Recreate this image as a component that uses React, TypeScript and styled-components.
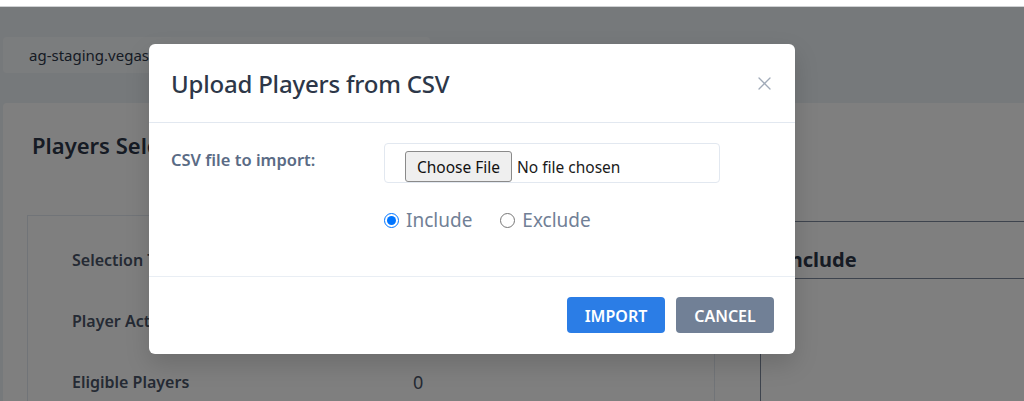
import React from 'react';
import styled, { createGlobalStyle } from 'styled-components';

const GlobalStyle = createGlobalStyle`
  html, body {
    margin: 0;
    padding: 0;
    background: #ffffff;
  }
  body {
    font-family: "Noto Sans", "Open Sans", "Liberation Sans", sans-serif;
  }
  * {
    box-sizing: border-box;
  }
`;

const Shell = styled.div`
  display: flex;
  flex-direction: column;
  height: 401px;
  overflow: hidden;
`;

const BrowserStrip = styled.div`
  height: 7px;
  background: #ffffff;
  border-bottom: 1px solid #cfd1d3;
  flex-shrink: 0;
`;

const Stage = styled.div`
  position: relative;
  flex: 1;
  background: #edf2f7;
  overflow: hidden;
`;

const Page = styled.div`
  width: 1060px;
  padding: 30px 0 0 3px;
`;

const Crumb = styled.div`
  width: 427px;
  height: 36px;
  display: flex;
  align-items: center;
  padding-left: 26px;
  background: #f7fafc;
  border-radius: 4px;
  font-size: 15px;
  color: #2d3748;
`;

const Card = styled.section`
  margin-top: 30px;
  background: #ffffff;
  border-radius: 4px;
  min-height: 320px;
`;

const CardTitle = styled.h2`
  margin: 0;
  padding: 27px 29px 0;
  font-size: 22px;
  line-height: 30px;
  font-weight: 600;
  color: #2d3748;
`;

const CardBody = styled.div`
  display: flex;
  align-items: flex-start;
  gap: 45px;
  padding: 55px 0 0 24px;
`;

const DetailsBox = styled.div`
  width: 688px;
  height: 200px;
  border: 1px solid #e2e8f0;
  padding: 13px 0 0 44px;
`;

const DetailRow = styled.div`
  display: grid;
  grid-template-columns: 341px 1fr;
  align-items: center;
  height: 61px;
  font-size: 16px;
  line-height: 24px;
`;

const DetailLabel = styled.span`
  font-weight: 600;
  color: #4a5568;
`;

const DetailValue = styled.span`
  font-size: 18px;
  color: #4a5568;
`;

const RulesTable = styled.div`
  flex: 1;
  margin-top: 6px;
  height: 200px;
  border-top: 1px solid #7d889c;
  border-left: 1px solid #7d889c;
`;

const RulesHead = styled.div`
  padding: 24px 0 5px 21px;
  border-bottom: 1px solid #7d889c;
  font-size: 20px;
  line-height: 27px;
  font-weight: 700;
  color: #2d3748;
`;

const Overlay = styled.div`
  position: absolute;
  inset: 0;
  background: rgba(0, 0, 0, 0.5);
  padding: 37px 0 0 149px;
`;

const Modal = styled.div`
  width: 646px;
  background: #ffffff;
  border-radius: 6px;
  box-shadow: 0 10px 25px rgba(0, 0, 0, 0.15);
`;

const ModalHeader = styled.header`
  height: 79px;
  display: flex;
  align-items: center;
  justify-content: space-between;
  padding: 0 24px 0 22px;
  border-bottom: 1px solid #e2e8f0;
`;

const ModalTitle = styled.h3`
  margin: 0;
  font-size: 24px;
  font-weight: 500;
  color: #2d3748;
  letter-spacing: -0.2px;
`;

const CloseButton = styled.button`
  display: flex;
  padding: 0;
  border: 0;
  background: none;
  cursor: pointer;
`;

const ModalBody = styled.div`
  height: 154px;
  padding: 20px 22px 0;
  border-bottom: 1px solid #e9eef4;
`;

const FileRow = styled.div`
  display: grid;
  grid-template-columns: 213px 336px;
  align-items: start;
`;

const FieldLabel = styled.label`
  padding-top: 6px;
  font-size: 16.5px;
  line-height: 22px;
  font-weight: 600;
  color: #5a6b85;
`;

const FileBox = styled.div`
  height: 40px;
  display: flex;
  align-items: flex-start;
  gap: 5px;
  padding: 7px 0 0 20px;
  border: 1px solid #e2e8f0;
  border-radius: 4px;
  overflow: hidden;
`;

const ChooseButton = styled.span`
  width: 107px;
  height: 31px;
  display: flex;
  align-items: center;
  justify-content: center;
  background: #efefef;
  border: 1px solid #8a8a8a;
  border-radius: 3px;
  font-size: 15.5px;
  color: #111111;
`;

const FileStatus = styled.span`
  line-height: 33px;
  font-size: 15.5px;
  color: #1a1a1a;
`;

const RadioRow = styled.div`
  display: flex;
  gap: 28px;
  margin: 24px 0 0 213px;
`;

const RadioOption = styled.label`
  display: flex;
  align-items: center;
  gap: 7px;
  font-size: 19px;
  line-height: 26px;
  color: #718096;
`;

const RadioInput = styled.input`
  width: 15px;
  height: 15px;
  margin: 0;
  accent-color: #0075ff;
`;

const ModalFooter = styled.footer`
  display: flex;
  justify-content: flex-end;
  gap: 11px;
  padding: 20px 21px 21px;
`;

const ActionButton = styled.button<{ $tone: 'primary' | 'muted' }>`
  width: 98px;
  height: 36px;
  padding: 2px 0 0;
  border: 0;
  border-radius: 4px;
  background: ${(p) => (p.$tone === 'primary' ? '#2b7de6' : '#718096')};
  color: #ffffff;
  font-family: inherit;
  font-size: 16px;
  font-weight: 600;
  text-transform: uppercase;
  cursor: pointer;
`;

const CloseIcon = () => (
  <svg width="13" height="13" viewBox="0 0 13 13" fill="none">
    <path d="M1 1L12 12M12 1L1 12" stroke="#a0aab8" strokeWidth="1.3" strokeLinecap="round" />
  </svg>
);

const details = [
  { label: 'Selection Type', value: '' },
  { label: 'Player Action', value: '' },
  { label: 'Eligible Players', value: '0' },
];

const App: React.FC = () => {
  return (
    <Shell>
      <GlobalStyle />
      <BrowserStrip />
      <Stage>
        <Page>
          <Crumb>ag-staging.vegasplayers.com</Crumb>
          <Card>
            <CardTitle>Players Selection</CardTitle>
            <CardBody>
              <DetailsBox>
                {details.map((d) => (
                  <DetailRow key={d.label}>
                    <DetailLabel>{d.label}</DetailLabel>
                    <DetailValue>{d.value}</DetailValue>
                  </DetailRow>
                ))}
              </DetailsBox>
              <RulesTable>
                <RulesHead>Include</RulesHead>
              </RulesTable>
            </CardBody>
          </Card>
        </Page>
        <Overlay>
          <Modal>
            <ModalHeader>
              <ModalTitle>Upload Players from CSV</ModalTitle>
              <CloseButton aria-label="Close">
                <CloseIcon />
              </CloseButton>
            </ModalHeader>
            <ModalBody>
              <FileRow>
                <FieldLabel>CSV file to import:</FieldLabel>
                <FileBox>
                  <ChooseButton>Choose File</ChooseButton>
                  <FileStatus>No file chosen</FileStatus>
                </FileBox>
              </FileRow>
              <RadioRow>
                <RadioOption>
                  <RadioInput type="radio" name="mode" defaultChecked />
                  Include
                </RadioOption>
                <RadioOption>
                  <RadioInput type="radio" name="mode" />
                  Exclude
                </RadioOption>
              </RadioRow>
            </ModalBody>
            <ModalFooter>
              <ActionButton $tone="primary">Import</ActionButton>
              <ActionButton $tone="muted">Cancel</ActionButton>
            </ModalFooter>
          </Modal>
        </Overlay>
      </Stage>
    </Shell>
  );
};

export default App;
